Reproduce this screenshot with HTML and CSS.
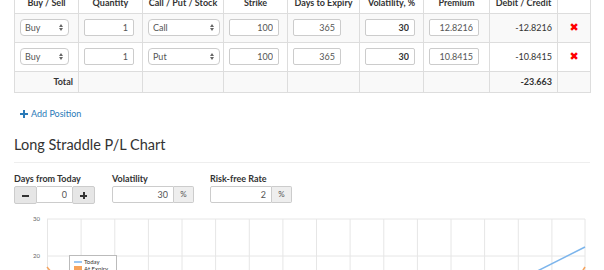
FILE: index.html
```html
<!DOCTYPE html>
<html lang="en">
<head>
    <meta charset="UTF-8">
    <meta name="viewport" content="width=device-width, initial-scale=1.0">
    <title>Long Straddle Calculator</title>
    <link rel="stylesheet" href="styles.css">
</head>
<body>
    <div class="page">
        <!-- Positions table -->
        <table class="positions">
            <colgroup>
                <col style="width: 64px">
                <col style="width: 64px">
                <col style="width: 81px">
                <col style="width: 64px">
                <col style="width: 72px">
                <col style="width: 64px">
                <col style="width: 66px">
                <col style="width: 68px">
                <col style="width: 33px">
            </colgroup>
            <thead>
                <tr>
                    <th>Buy / Sell</th>
                    <th>Quantity</th>
                    <th>Call / Put / Stock</th>
                    <th>Strike</th>
                    <th>Days to Expiry</th>
                    <th>Volatility, %</th>
                    <th>Premium</th>
                    <th>Debit / Credit</th>
                    <th></th>
                </tr>
            </thead>
            <tbody>
                <tr class="odd">
                    <td><span class="select select-side">Buy<span class="arrows"></span></span></td>
                    <td><input class="field" type="text" value="1"></td>
                    <td><span class="select select-type">Call<span class="arrows"></span></span></td>
                    <td><input class="field" type="text" value="100"></td>
                    <td><input class="field field-days" type="text" value="365"></td>
                    <td><input class="field bold" type="text" value="30"></td>
                    <td><input class="field field-premium" type="text" value="12.8216"></td>
                    <td class="num">-12.8216</td>
                    <td class="remove">&#10006;</td>
                </tr>
                <tr>
                    <td><span class="select select-side">Buy<span class="arrows"></span></span></td>
                    <td><input class="field" type="text" value="1"></td>
                    <td><span class="select select-type">Put<span class="arrows"></span></span></td>
                    <td><input class="field" type="text" value="100"></td>
                    <td><input class="field field-days" type="text" value="365"></td>
                    <td><input class="field bold" type="text" value="30"></td>
                    <td><input class="field field-premium" type="text" value="10.8415"></td>
                    <td class="num">-10.8415</td>
                    <td class="remove">&#10006;</td>
                </tr>
                <tr class="odd total">
                    <td class="num">Total</td>
                    <td></td>
                    <td></td>
                    <td></td>
                    <td></td>
                    <td></td>
                    <td></td>
                    <td class="num">-23.663</td>
                    <td></td>
                </tr>
            </tbody>
        </table>

        <a class="add-link" href="#"><span class="plus-icon"></span>Add Position</a>

        <h2 class="chart-title">Long Straddle P/L Chart</h2>

        <div class="controls">
            <div class="control">
                <label>Days from Today</label>
                <div class="input-group">
                    <button class="step-btn"><span class="minus-icon"></span></button>
                    <input class="group-field days-field" type="text" value="0">
                    <button class="step-btn"><span class="plus-dark"></span></button>
                </div>
            </div>
            <div class="control">
                <label>Volatility</label>
                <div class="input-group">
                    <input class="group-field" type="text" value="30">
                    <span class="addon">%</span>
                </div>
            </div>
            <div class="control">
                <label>Risk-free Rate</label>
                <div class="input-group">
                    <input class="group-field" type="text" value="2">
                    <span class="addon">%</span>
                </div>
            </div>
        </div>

        <!-- P/L chart -->
        <svg class="chart" width="576" height="60" viewBox="0 0 576 60">
            <g class="grid">
                <line x1="33" y1="8" x2="571" y2="8"/>
                <line x1="33" y1="45" x2="571" y2="45"/>
                <line x1="33.5" y1="8" x2="33.5" y2="60"/>
                <line x1="67.1" y1="8" x2="67.1" y2="60"/>
                <line x1="100.8" y1="8" x2="100.8" y2="60"/>
                <line x1="134.4" y1="8" x2="134.4" y2="60"/>
                <line x1="168" y1="8" x2="168" y2="60"/>
                <line x1="201.6" y1="8" x2="201.6" y2="60"/>
                <line x1="235.3" y1="8" x2="235.3" y2="60"/>
                <line x1="268.9" y1="8" x2="268.9" y2="60"/>
                <line x1="302.5" y1="8" x2="302.5" y2="60"/>
                <line x1="336.1" y1="8" x2="336.1" y2="60"/>
                <line x1="369.8" y1="8" x2="369.8" y2="60"/>
                <line x1="403.4" y1="8" x2="403.4" y2="60"/>
                <line x1="437" y1="8" x2="437" y2="60"/>
                <line x1="470.6" y1="8" x2="470.6" y2="60"/>
                <line x1="504.3" y1="8" x2="504.3" y2="60"/>
                <line x1="537.9" y1="8" x2="537.9" y2="60"/>
                <line x1="571" y1="8" x2="571" y2="60"/>
            </g>
            <text class="axis" x="26" y="10" text-anchor="end">30</text>
            <text class="axis" x="26" y="47" text-anchor="end">20</text>
            <polyline class="today" points="500,71.8 571,36"/>
            <polyline class="expiry" points="33,56 38,62"/>
            <polyline class="expiry" points="566,64 571,56"/>
            <rect class="legend" x="55.5" y="44.5" width="47" height="30"/>
            <line class="today" x1="60" y1="51" x2="68" y2="51"/>
            <text class="legend-text" x="70" y="53">Today</text>
            <rect x="60" y="55" width="8" height="4" fill="#f7a35c"/>
            <text class="legend-text" x="70" y="59.5">At Expiry</text>
        </svg>
    </div>
</body>
</html>
```

FILE: styles.css
```css
body {
    font-family: Lato, "Open Sans", sans-serif;
    margin: 0;
    padding: 0;
    color: #333;
    background-color: #fff;
    overflow: hidden;
}
.page {
    padding: 0 14px;
}

/* Positions table */
.positions {
    width: 576px;
    margin-top: -8px;
    border-collapse: collapse;
    table-layout: fixed;
    font-size: 9px;
}
.positions th,
.positions td {
    border: 1px solid #ddd;
    padding: 5px 5px 6px;
    line-height: 10px;
}
.positions th {
    padding: 5px;
    font-weight: bold;
    text-align: center;
    white-space: nowrap;
}
.positions .total td {
    padding: 5px;
    font-weight: bold;
}
.positions tr.odd td {
    background-color: #f9f9f9;
}
.positions .num {
    text-align: right;
}
.remove {
    text-align: center;
    color: #f00;
    font-size: 11px;
    font-family: "DejaVu Sans", sans-serif;
}
.field {
    display: block;
    box-sizing: border-box;
    width: 50px;
    height: 17px;
    padding: 0 5px;
    border: 1px solid #ccc;
    border-radius: 2px;
    font-family: inherit;
    font-size: 9px;
    color: #555;
    text-align: right;
    background: #fff;
}
.field.bold {
    font-weight: bold;
    color: #333;
}
.field-days {
    width: 48px;
}
.select {
    position: relative;
    display: block;
    box-sizing: border-box;
    height: 17px;
    padding: 0 4px;
    border: 1px solid #ccc;
    border-radius: 4px;
    line-height: 15px;
    color: #555;
    background: #fff;
}
.select-side {
    width: 49px;
}
.select-type {
    width: 72px;
}
.arrows {
    position: absolute;
    right: 5px;
    top: 4px;
    width: 0;
    height: 0;
    border-left: 2px solid transparent;
    border-right: 2px solid transparent;
    border-bottom: 3px solid #666;
}
.arrows::after {
    content: "";
    position: absolute;
    left: -2px;
    top: 4px;
    border-left: 2px solid transparent;
    border-right: 2px solid transparent;
    border-top: 3px solid #666;
}

/* Add position link */
.add-link {
    display: inline-flex;
    align-items: center;
    gap: 3px;
    margin: 15px 0 0 6px;
    font-size: 9px;
    color: #2a7ab8;
    text-decoration: none;
}
.plus-icon {
    position: relative;
    width: 8px;
    height: 8px;
}
.plus-icon::before,
.plus-icon::after {
    content: "";
    position: absolute;
    background-color: #2a7ab8;
}
.plus-icon::before {
    left: 0;
    top: 3px;
    width: 8px;
    height: 2px;
}
.plus-icon::after {
    left: 3px;
    top: 0;
    width: 2px;
    height: 8px;
}

/* Chart section */
.chart-title {
    margin: 14px 0 0;
    padding-bottom: 7px;
    border-bottom: 1px solid #eee;
    font-size: 14.5px;
    font-weight: normal;
    line-height: 20px;
}
.controls {
    display: flex;
    margin-top: 10px;
}
.control {
    display: flex;
    flex-direction: column;
    width: 98px;
}
.control label {
    font-size: 9px;
    font-weight: bold;
    line-height: 11px;
    margin-bottom: 2px;
}
.input-group {
    display: flex;
    height: 17px;
}
.group-field {
    box-sizing: border-box;
    width: 62px;
    height: 17px;
    padding: 0 5px;
    border: 1px solid #ccc;
    border-radius: 2px 0 0 2px;
    font-family: inherit;
    font-size: 9px;
    color: #555;
    text-align: right;
}
.days-field {
    width: 35px;
    border-radius: 0;
    border-left: none;
    border-right: none;
}
.addon {
    box-sizing: border-box;
    width: 20px;
    height: 17px;
    border: 1px solid #ccc;
    border-left: none;
    border-radius: 0 2px 2px 0;
    background-color: #eee;
    color: #555;
    font-size: 8px;
    line-height: 15px;
    text-align: center;
}
.step-btn {
    position: relative;
    box-sizing: border-box;
    width: 23px;
    height: 18px;
    padding: 0;
    border: 1px solid #ccc;
    border-radius: 2px;
    background-color: #e6e6e6;
    cursor: pointer;
}
.minus-icon,
.plus-dark {
    position: absolute;
    left: 7px;
    top: 8px;
    width: 7px;
    height: 2px;
    background-color: #333;
}
.plus-dark::after {
    content: "";
    position: absolute;
    left: 2.5px;
    top: -2.5px;
    width: 2px;
    height: 7px;
    background-color: #333;
}
.chart {
    display: block;
    margin-top: 8px;
}
.chart .grid line {
    stroke: #e6e6e6;
    stroke-width: 1;
}
.chart .axis {
    font-size: 6px;
    fill: #666;
}
.chart .today {
    fill: none;
    stroke: #7cb5ec;
    stroke-width: 1.5;
}
.chart .expiry {
    fill: none;
    stroke: #f7a35c;
    stroke-width: 1.5;
}
.chart .legend {
    fill: #fff;
    stroke: #bbb;
    stroke-width: 1;
}
.chart .legend-text {
    font-size: 6px;
    fill: #333;
}
```
